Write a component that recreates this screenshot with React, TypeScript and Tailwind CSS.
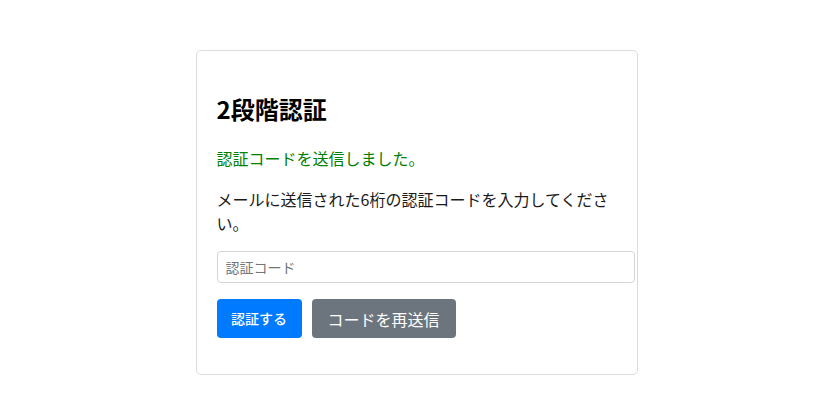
export default function App() {
  return (
    <div
      className="min-h-screen bg-white pt-[50px]"
      style={{ fontFamily: '"Noto Sans CJK JP", "Noto Sans", sans-serif' }}
    >
      <div className="mx-auto w-[442px] rounded-[5px] border border-[#dcdcdc] px-5 pt-px pb-5">
        <h2 className="mt-[42px] text-[24px] leading-[29px] font-bold text-black">
          2段階認証
        </h2>
        <p className="mt-[23px] text-[16px] leading-6 text-[#008000]">
          認証コードを送信しました。
        </p>
        <p className="mt-[17px] text-[16px] leading-6 text-[#1a1a1a]">
          メールに送信された6桁の認証コードを入力してください。
        </p>
        <input
          type="text"
          placeholder="認証コード"
          className="mt-4 box-content h-[30px] w-full rounded-[4px] border border-[#d6d6d6] px-2 py-0 text-[14px] text-[#333] placeholder:text-[#757575] outline-none"
        />
        <div className="mt-4 flex gap-[10px]">
          <button className="h-[39px] w-[85px] rounded-[4px] bg-[#007bff] text-[14px] font-medium text-white">
            認証する
          </button>
          <button className="h-[39px] w-[144px] rounded-[4px] bg-[#6c757d] text-[16px] text-white">
            コードを再送信
          </button>
        </div>
        <div className="h-[16px]" />
      </div>
    </div>
  );
}
